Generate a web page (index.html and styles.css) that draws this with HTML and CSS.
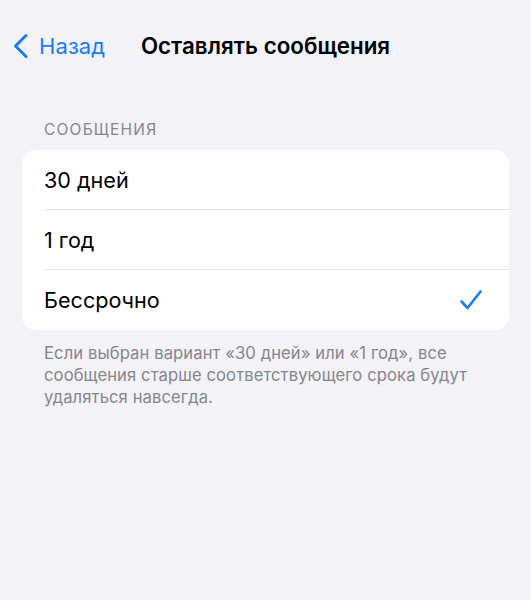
FILE: index.html
```html
<!DOCTYPE html>
<html lang="ru">
<head>
<meta charset="utf-8">
<link rel="stylesheet" href="styles.css">
</head>
<body>
<div class="screen">
  <header class="nav">
    <a class="back">
      <svg class="chev" width="17" height="26" viewBox="0 0 17 26"><path d="M14 2.5 L3.5 13 L14 23.5" fill="none" stroke="#1a7cf5" stroke-width="3" stroke-linecap="round" stroke-linejoin="round"/></svg>
      <span>Назад</span>
    </a>
    <h1 class="title">Оставлять сообщения</h1>
  </header>
  <section class="group">
    <div class="group-header">СООБЩЕНИЯ</div>
    <div class="card">
      <div class="row"><span>30 дней</span></div>
      <div class="row"><span>1 год</span></div>
      <div class="row"><span>Бессрочно</span>
        <svg class="check" width="24" height="22" viewBox="0 0 24 22"><path d="M2.5 12.5 L8.5 19 L21.5 2.5" fill="none" stroke="#1a7cf5" stroke-width="2.6" stroke-linecap="round" stroke-linejoin="round"/></svg>
      </div>
    </div>
    <p class="footer">Если выбран вариант «30 дней» или «1 год», все сообщения старше соответствующего срока будут удаляться навсегда.</p>
  </section>
</div>
</body>
</html>
```

FILE: styles.css
```css
html, body {
  margin: 0;
  padding: 0;
  background: #f2f2f7;
}
body {
  font-family: Inter, "Liberation Sans", Arial, sans-serif;
  -webkit-font-smoothing: antialiased;
}
.screen {
  width: 531px;
  height: 600px;
  background: #f2f2f7;
}
.nav {
  position: relative;
  height: 92px;
  display: flex;
  align-items: flex-start;
  padding-top: 32px;
  box-sizing: border-box;
}
.back {
  display: flex;
  align-items: center;
  gap: 10px;
  padding-left: 12px;
  color: #1a7cf5;
  font-size: 22px;
  height: 28px;
  letter-spacing: 0.1px;
}
.chev {
  display: block;
}
.title {
  position: absolute;
  left: 0;
  right: 0;
  top: 32px;
  margin: 0;
  text-align: center;
  font-size: 22.3px;
  font-weight: 600;
  color: #000;
  line-height: 28px;
  letter-spacing: 0.05px;
  pointer-events: none;
}
.group {
  padding: 0 22px;
}
.group-header {
  padding-left: 22px;
  font-size: 15.5px;
  color: #86868b;
  letter-spacing: 1.2px;
  line-height: 18px;
  margin-top: 29px;
  margin-bottom: 11px;
}
.card {
  background: #fff;
  border-radius: 14px;
  overflow: hidden;
}
.row {
  height: 60px;
  margin-left: 22px;
  padding-right: 26px;
  display: flex;
  align-items: center;
  justify-content: space-between;
  font-size: 21.6px;
  color: #000;
  border-bottom: 1px solid #e4e4e8;
  box-sizing: border-box;
}
.row:last-child {
  border-bottom: none;
}
.check {
  display: block;
}
.footer {
  margin: 12px 0 0;
  padding: 0 22px;
  font-size: 16.6px;
  line-height: 22px;
  color: #86868b;
  letter-spacing: 0.1px;
}
```
